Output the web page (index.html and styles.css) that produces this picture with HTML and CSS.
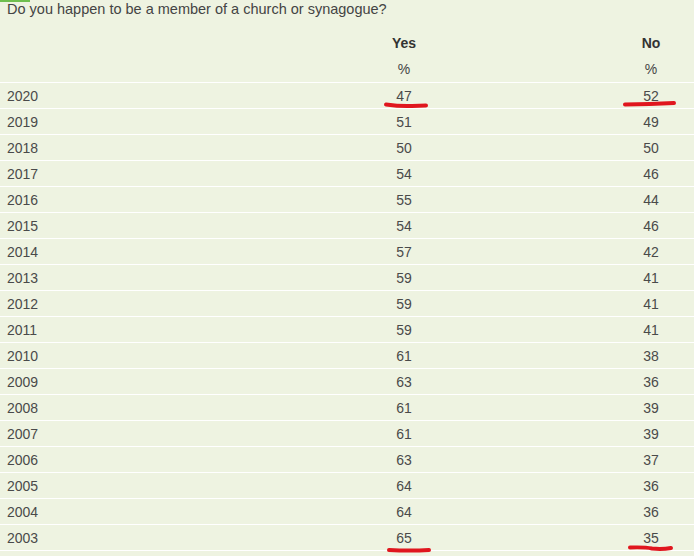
FILE: index.html
```html
<!DOCTYPE html>
<html>
<head>
<meta charset="utf-8">
<link rel="stylesheet" href="styles.css">
</head>
<body>
<div class="page">
  <div class="tab-bar"></div>
  <p class="question">Do you happen to be a member of a church or synagogue?</p>
  <div class="table">
    <div class="row head"><span></span><span class="yes">Yes</span><span></span><span class="no">No</span></div>
    <div class="row head"><span></span><span class="yes pct">%</span><span></span><span class="no pct">%</span></div>
    <div class="row data"><span class="year">2020</span><span class="yes">47</span><span></span><span class="no">52</span></div>
    <div class="row data"><span class="year">2019</span><span class="yes">51</span><span></span><span class="no">49</span></div>
    <div class="row data"><span class="year">2018</span><span class="yes">50</span><span></span><span class="no">50</span></div>
    <div class="row data"><span class="year">2017</span><span class="yes">54</span><span></span><span class="no">46</span></div>
    <div class="row data"><span class="year">2016</span><span class="yes">55</span><span></span><span class="no">44</span></div>
    <div class="row data"><span class="year">2015</span><span class="yes">54</span><span></span><span class="no">46</span></div>
    <div class="row data"><span class="year">2014</span><span class="yes">57</span><span></span><span class="no">42</span></div>
    <div class="row data"><span class="year">2013</span><span class="yes">59</span><span></span><span class="no">41</span></div>
    <div class="row data"><span class="year">2012</span><span class="yes">59</span><span></span><span class="no">41</span></div>
    <div class="row data"><span class="year">2011</span><span class="yes">59</span><span></span><span class="no">41</span></div>
    <div class="row data"><span class="year">2010</span><span class="yes">61</span><span></span><span class="no">38</span></div>
    <div class="row data"><span class="year">2009</span><span class="yes">63</span><span></span><span class="no">36</span></div>
    <div class="row data"><span class="year">2008</span><span class="yes">61</span><span></span><span class="no">39</span></div>
    <div class="row data"><span class="year">2007</span><span class="yes">61</span><span></span><span class="no">39</span></div>
    <div class="row data"><span class="year">2006</span><span class="yes">63</span><span></span><span class="no">37</span></div>
    <div class="row data"><span class="year">2005</span><span class="yes">64</span><span></span><span class="no">36</span></div>
    <div class="row data"><span class="year">2004</span><span class="yes">64</span><span></span><span class="no">36</span></div>
    <div class="row data last"><span class="year">2003</span><span class="yes">65</span><span></span><span class="no">35</span></div>
  </div>
  <svg class="marks" width="694" height="556" viewBox="0 0 694 556">
    <path d="M386 104.5 Q 400 106.5 412 106 Q 420 105.5 426 105.5" />
    <path d="M625 104.5 Q 650 104 674 103" />
    <path d="M389 550 Q 410 551 429 550" />
    <path d="M630 547.5 Q 645 547 652 548.5 Q 662 549.5 671 548" />
  </svg>
</div>
</body>
</html>
```

FILE: styles.css
```css
html, body {
  margin: 0;
  padding: 0;
  background: #eef3e1;
}
.page {
  position: relative;
  width: 694px;
  height: 556px;
  overflow: hidden;
  font-family: "Liberation Sans", Arial, sans-serif;
  color: #4a4a4a;
}
.tab-bar {
  width: 30px;
  height: 2px;
  background: #6fbf4f;
}
.question {
  margin: 0;
  padding-left: 7px;
  font-size: 14.5px;
  line-height: 14px;
  height: 28px;
  color: #444;
}
.table {
  display: flex;
  flex-direction: column;
}
.row {
  display: grid;
  grid-template-columns: 340px 128px 1fr 86px;
  align-items: center;
  font-size: 14px;
  height: 26px;
  box-sizing: border-box;
}
.row span {
  text-align: center;
}
.row .year {
  text-align: left;
  padding-left: 7px;
}
.head {
  font-weight: bold;
  color: #333;
}
.head .pct {
  font-weight: normal;
  color: #444;
}
.data {
  border-top: 1px solid #ffffff;
}
.data.last {
  border-bottom: 1px solid #ffffff;
  height: 27px;
}
.marks {
  position: absolute;
  left: 0;
  top: 0;
  pointer-events: none;
}
.marks path {
  fill: none;
  stroke: #e0161e;
  stroke-width: 4;
  stroke-linecap: round;
}
```
